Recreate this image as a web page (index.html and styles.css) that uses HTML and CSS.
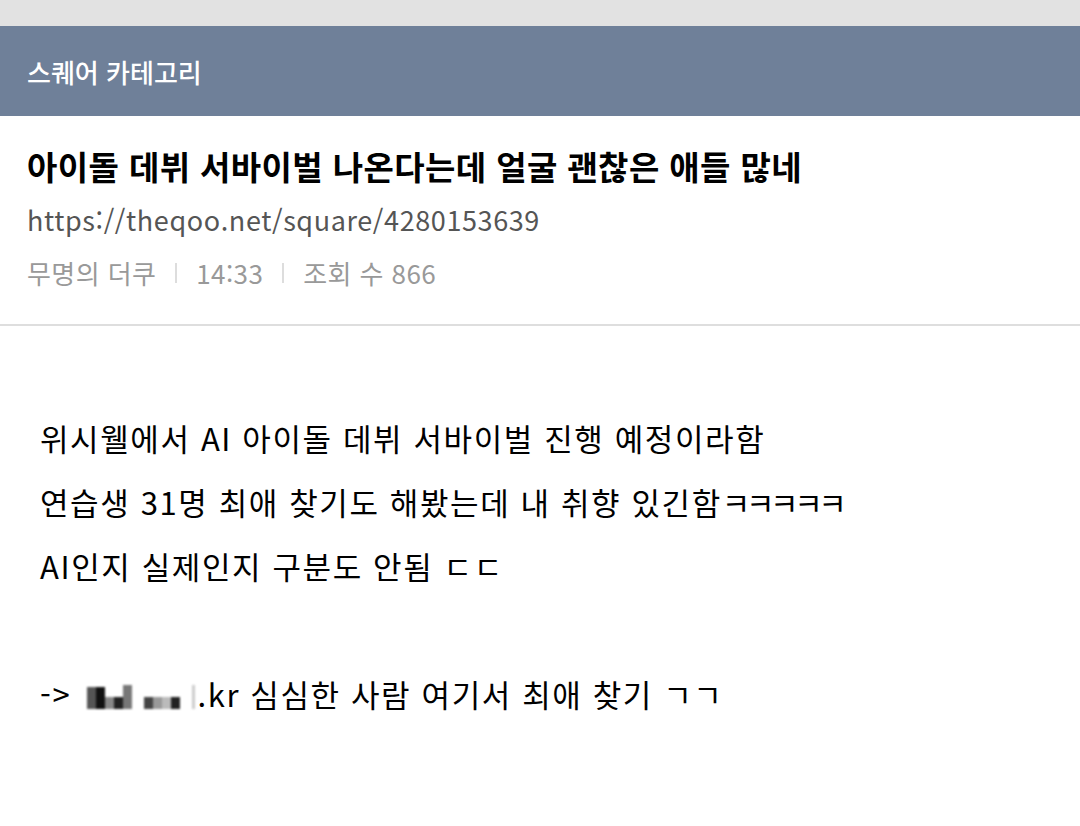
FILE: index.html
```html
<!DOCTYPE html>
<html lang="ko">
<head>
    <meta charset="UTF-8">
    <meta name="viewport" content="width=device-width, initial-scale=1.0">
    <title>스퀘어 카테고리</title>
    <link rel="stylesheet" href="styles.css">
</head>
<body>
    <div class="status-strip"></div>

    <div class="category-bar">스퀘어 카테고리</div>

    <div class="post-head">
        <h1 class="post-title">아이돌 데뷔 서바이벌 나온다는데 얼굴 괜찮은 애들 많네</h1>
        <div class="post-url">https://theqoo.net/square/4280153639</div>
        <div class="post-meta">
            <span>무명의 더쿠</span>
            <span class="sep"></span>
            <span>14:33</span>
            <span class="sep"></span>
            <span>조회 수 866</span>
        </div>
    </div>

    <div class="post-body">
        <p>위시웰에서 AI 아이돌 데뷔 서바이벌 진행 예정이라함</p>
        <p>연습생 31명 최애 찾기도 해봤는데 내 취향 있긴함<span class="jamo">ㅋㅋㅋㅋㅋ</span></p>
        <p>AI인지 실제인지 구분도 안됨 ㄷㄷ</p>
        <p class="blank"></p>
        <p>-&gt; <span class="mosaic">
                <i class="m1"></i><i class="m2"></i><i class="m3"></i><i class="m4"></i><i class="m5"></i><i class="gap"></i><i class="m6"></i><i class="m7"></i><i class="m8"></i><i class="m9"></i><i class="gap"></i><i class="m10"></i>
            </span>.kr 심심한 사람 여기서 최애 찾기 ㄱㄱ</p>
    </div>
</body>
</html>
```

FILE: styles.css
```css
body {
    margin: 0;
    font-family: "Noto Sans CJK KR", "Noto Sans", sans-serif;
    background-color: white;
    color: #111;
}
.status-strip {
    height: 26px;
    background-color: #e2e2e2;
}
.category-bar {
    height: 90px;
    display: flex;
    align-items: center;
    padding-left: 27px;
    background-color: #6f8099;
    color: white;
    font-size: 26px;
    font-weight: 500;
}
.post-head {
    padding: 24px 27px 26px;
    border-bottom: 2px solid #dedede;
}
.post-title {
    margin: 0;
    font-size: 33px;
    letter-spacing: 0.4px;
    line-height: 52px;
    font-weight: 700;
    color: #000;
}
.post-url {
    font-size: 27px;
    letter-spacing: 0.6px;
    line-height: 56px;
    color: #555;
}
.post-meta {
    display: flex;
    align-items: center;
    gap: 19px;
    font-size: 26px;
    letter-spacing: 0.4px;
    line-height: 50px;
    color: #999;
}
.sep {
    width: 2px;
    height: 20px;
    background-color: #ddd;
}
.post-body {
    padding: 80px 40px;
    font-size: 31px;
    letter-spacing: 1.6px;
    color: #000;
}
.post-body p {
    margin: 0;
    line-height: 64px;
    height: 64px;
}
/* ㅋㅋㅋ sits tighter than the rest of the line */
.jamo {
    letter-spacing: -4.4px;
}
.mosaic {
    display: inline-flex;
    align-items: flex-end;
    height: 28px;
    margin: 0 2px 0 6px;
    vertical-align: -2px;
    filter: blur(1.2px);
}
.mosaic i {
    display: block;
    width: 9px;
}
.mosaic .gap { width: 12px; }
.m1 { height: 22px; background-color: #555; }
.m2 { height: 22px; background-color: #111; }
.m3 { height: 12px; background-color: #888; }
.m4 { height: 12px; background-color: #222; }
.m5 { height: 24px; background-color: #777; }
.m6 { height: 12px; background-color: #444; }
.m7 { height: 12px; background-color: #999; }
.m8 { height: 12px; background-color: #bbb; }
.m9 { height: 12px; background-color: #222; }
.m10 { height: 24px; width: 3px !important; background-color: #ccc; }
```
